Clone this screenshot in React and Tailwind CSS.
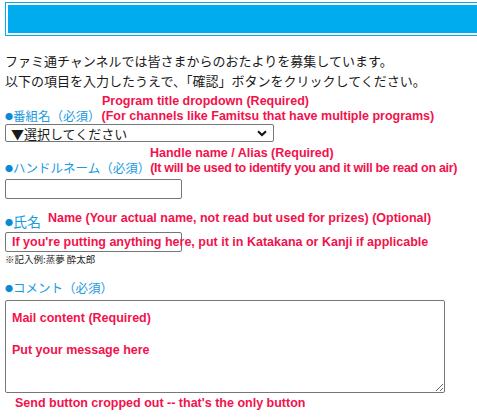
import React from "react";

const jp = { fontFamily: '"Noto Sans CJK JP", "Noto Sans", sans-serif' };
const red = "font-bold text-[#f2124c] whitespace-nowrap";
const redFont = { fontFamily: '"Liberation Sans", Arial, sans-serif' };

function Label({ children, big }) {
  return (
    <span className={`text-[#1a9ae0] whitespace-nowrap ${big ? "text-[14px]" : "text-[12.5px]"}`} style={jp}>
      <span className="text-[#0a8ad6] text-[8px] align-[1px]">●</span>
      {children}
    </span>
  );
}

export default function App() {
  return (
    <div className="w-[477px] h-[420px] overflow-hidden bg-white text-[#1a1a1a]">
      {/* header bar */}
      <div className="mt-[2px] ml-[5px] w-[520px] border border-[#00aeea] p-[2px]">
        <div className="h-[28px] bg-[#00acee]" />
      </div>

      <div className="pl-[5px]">
        {/* intro */}
        <div className="mt-[15px] text-[13px] leading-[20px]" style={jp}>
          <p>ファミ通チャンネルでは皆さまからのおたよりを募集しています。</p>
          <p>以下の項目を入力したうえで、「確認」ボタンをクリックしてください。</p>
        </div>

        {/* program */}
        <div className={`h-[14px] mt-[3px] pl-[97px] text-[12.5px] leading-[14px] ${red}`} style={redFont}>
          Program title dropdown (Required)
        </div>
        <div className="h-[16px] flex items-center gap-[1px]">
          <Label>番組名（必須）</Label>
          <span className={`text-[12.5px] ${red}`} style={redFont}>
            (For channels like Famitsu that have multiple programs)
          </span>
        </div>
        <div className="h-[18px] w-[269px] border border-[#767676] rounded-[2px] flex items-center justify-between pl-[5px] pr-[6px] text-[13px] leading-none" style={jp}>
          <span>▼選択してください</span>
          <svg width="10" height="7" viewBox="0 0 10 7">
            <path d="M1 1.2 L5 5 L9 1.2" fill="none" stroke="#111" strokeWidth="2" />
          </svg>
        </div>

        {/* handle name */}
        <div className={`h-[14px] mt-[4px] pl-[145px] text-[12.5px] leading-[14px] ${red}`} style={redFont}>
          Handle name / Alias (Required)
        </div>
        <div className="h-[17px] flex items-center">
          <Label>ハンドルネーム（必須）</Label>
          <span className={`text-[12.5px] tracking-[-0.3px] ${red}`} style={redFont}>
            (It will be used to identify you and it will be read on air)
          </span>
        </div>
        <input className="block mt-[2px] h-[20px] w-[177px] border border-[#767676] rounded-[2px]" />

        {/* name */}
        <div className="mt-[9px] h-[24px] flex items-center gap-[7px]">
          <span className="translate-y-[1px]"><Label big>氏名</Label></span>
          <span className={`text-[12.5px] -translate-y-[2px] ${red}`} style={redFont}>
            Name (Your actual name, not read but used for prizes) (Optional)
          </span>
        </div>
        <div className="relative">
          <input className="block h-[20px] w-[177px] border border-[#767676] rounded-[2px]" />
          <span className={`absolute left-[7px] top-[3px] text-[12.5px] leading-[14px] ${red}`} style={redFont}>
            If you're putting anything here, put it in Katakana or Kanji if applicable
          </span>
        </div>
        <div className="h-[12px] text-[9.5px] leading-[12px] mt-[1px]" style={jp}>※記入例:蒸夢 酔太郎</div>

        {/* comment */}
        <div className="mt-[15px] h-[17px] flex items-center">
          <Label>コメント（必須）</Label>
        </div>
        <textarea
          readOnly
          className={`block mt-[3px] h-[93px] w-[440px] border border-[#767676] rounded-[2px] pt-[9px] pl-[6px] text-[12.5px] leading-[16px] resize-y ${red}`}
          style={redFont}
          defaultValue={"Mail content (Required)\n\nPut your message here"}
        />
        <div className={`mt-[3px] pl-[10px] text-[12.5px] leading-[14px] ${red}`} style={redFont}>
          Send button cropped out -- that's the only button
        </div>
      </div>
    </div>
  );
}
